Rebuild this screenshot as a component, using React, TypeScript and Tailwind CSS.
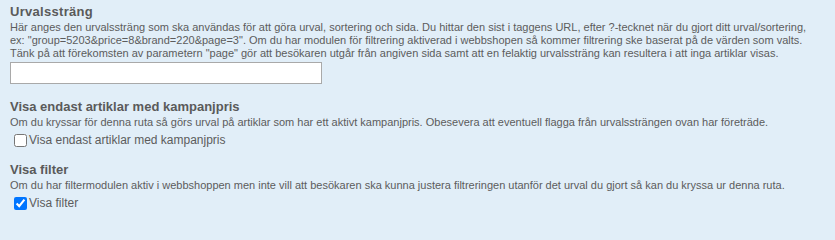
export default function App() {
  const font = { fontFamily: "Tahoma, 'Liberation Sans', Arial, sans-serif" };
  return (
    <div className="min-h-screen bg-[#e1eef8] text-[#5c5c5c] px-[10px] pt-[3px]" style={font}>
      <div className="text-[13px] font-bold leading-[17px] tracking-[0.3px] text-[#5a5a5a]">Urvalssträng</div>
      <p className="text-[11px] leading-[13px] mt-[1px]">
        Här anges den urvalssträng som ska användas för att göra urval, sortering och sida. Du hittar den sist i taggens URL, efter ?-tecknet när du gjort ditt urval/sortering,
        <br />
        ex: "group=5203&amp;price=8&amp;brand=220&amp;page=3". Om du har modulen för filtrering aktiverad i webbshopen så kommer filtrering ske baserat på de värden som valts.
        <br />
        Tänk på att förekomsten av parametern "page" gör att besökaren utgår från angiven sida samt att en felaktig urvalssträng kan resultera i att inga artiklar visas.
      </p>
      <input
        type="text"
        className="mt-[2px] block w-[312px] h-[22px] bg-white border border-[#a9a9a9] outline-none"
      />

      <div className="mt-[14px] text-[13px] font-bold leading-[17px] text-[#5a5a5a]">Visa endast artiklar med kampanjpris</div>
      <p className="text-[11px] leading-[13px] mt-[1px]">
        Om du kryssar för denna ruta så görs urval på artiklar som har ett aktivt kampanjpris. Obesevera att eventuell flagga från urvalssträngen ovan har företräde.
      </p>
      <label className="flex items-center mt-[4px] ml-[4px] text-[12px] leading-[15px]">
        <input type="checkbox" className="w-[13px] h-[13px] m-0 mr-[2px] accent-[#0075ff]" />
        <span>Visa endast artiklar med kampanjpris</span>
      </label>

      <div className="mt-[13px] text-[13px] font-bold leading-[17px] text-[#5a5a5a]">Visa filter</div>
      <p className="text-[11px] leading-[13px] mt-[1px]">
        Om du har filtermodulen aktiv i webbshoppen men inte vill att besökaren ska kunna justera filtreringen utanför det urval du gjort så kan du kryssa ur denna ruta.
      </p>
      <label className="flex items-center mt-[4px] ml-[4px] text-[12px] leading-[15px]">
        <input type="checkbox" defaultChecked className="w-[13px] h-[13px] m-0 mr-[2px] accent-[#0075ff]" />
        <span>Visa filter</span>
      </label>
    </div>
  );
}
